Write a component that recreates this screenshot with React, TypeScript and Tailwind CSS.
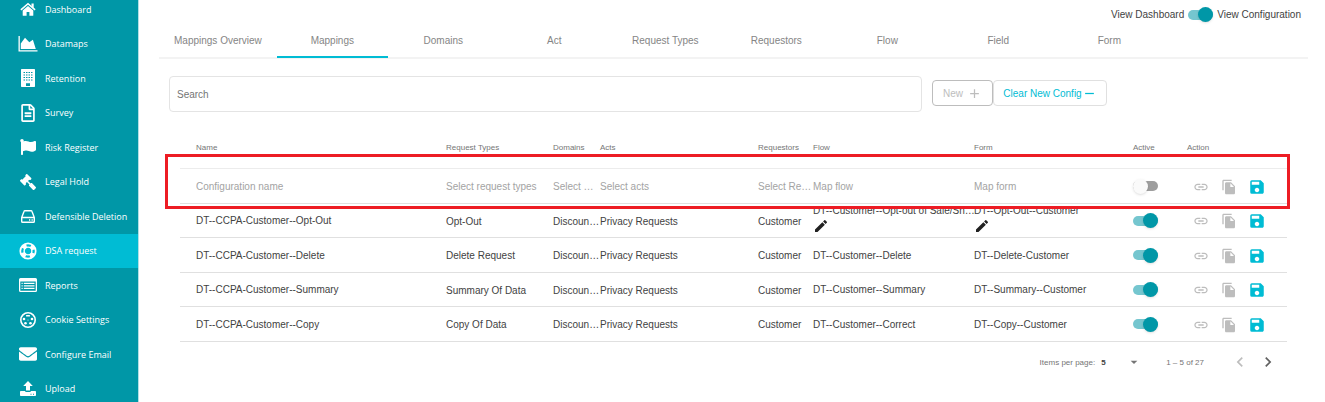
import React from 'react';
import { FaEnvelope, FaFlag, FaGavel, FaRegFileAlt } from 'react-icons/fa';
import {
  MdAdd,
  MdArrowDropDown,
  MdChevronLeft,
  MdChevronRight,
  MdEdit,
  MdFileCopy,
  MdLink,
  MdRemove,
  MdSave,
} from 'react-icons/md';

const HomeIcon = () => (
  <svg viewBox="0 0 16 14" className="w-4 h-[14px]" fill="currentColor">
    <path d="M.9 7.900 8 1.700l7.100 6.200" fill="none" stroke="currentColor" strokeWidth="1.600" />
    <path d="M11.500 1.500h2.200v4.800l-2.200-2z" />
    <path d="M8 3.900l5.300 4.600v4.700q0 .6-.6.6H9.400V9.900H6.600v3.900H3.300q-.6 0-.6-.6V8.500z" />
  </svg>
);

const AreaChartIcon = () => (
  <svg viewBox="0 0 20 16" className="w-5 h-4" fill="currentColor">
    <path d="M.5 0h1.300v14.200H19.500v1.300H.5z" />
    <path d="M2.800 13V7.500L7 1.800l4.300 4.400 3.600-2.400L17.800 13z" />
  </svg>
);

const BuildingIcon = () => (
  <svg viewBox="0 0 14 18" className="w-[14px] h-[18px]" fill="currentColor">
    <path
      fillRule="evenodd"
      d="M.7 0h12.6q.7 0 .7.7v16.6q0 .7-.7.7H.7q-.7 0-.7-.7V.7Q0 0 .7 0zM5 14.2V17h4v-2.8z"
    />
    <path
      d="M2.500 3.500h9M2.500 6h9M2.500 8.500h9M2.500 11h9"
      stroke="#0097a7"
      strokeWidth="1.2"
      strokeDasharray="1.5 1"
    />
  </svg>
);

const DriveIcon = () => (
  <svg viewBox="0 0 14 13" className="w-[14px] h-[13px]" fill="none" stroke="currentColor" strokeWidth="1.400" strokeLinejoin="round">
    <path d="M.7 7.500 3 1.400Q3.200.7 4 .7h6q.8 0 1 .7l2.300 6.100v3.900q0 .9-.9.9H1.600q-.9 0-.9-.9zM.7 7.500h12.600" />
    <path d="M8 10h1.300M10.500 10h1.300" />
  </svg>
);

const LifeRingIcon = () => (
  <svg viewBox="0 0 18 18" className="size-[18px]" fill="none" stroke="currentColor">
    <circle cx="9" cy="9" r="7.700" strokeWidth="1.700" />
    <circle cx="9" cy="9" r="3.900" strokeWidth="1.400" />
    <circle cx="9" cy="9" r="5.600" strokeWidth="4" strokeDasharray="4.400 4.396" strokeDashoffset="-2.200" />
  </svg>
);

const ListIcon = () => (
  <svg viewBox="0 0 18 14" className="w-[18px] h-[14px]" fill="currentColor">
    <path
      fillRule="evenodd"
      d="M1.500 0h15Q18 0 18 1.500v11q0 1.500-1.500 1.500h-15Q0 14 0 12.500v-11Q0 0 1.500 0zM1.300 3.500v8.700q0 .5.5.5h14.400q.5 0 .5-.5V3.500z"
    />
    <path d="M2.500 4.800h1.200V6H2.500zM4.800 4.800h10.700V6H4.800zM2.500 7.300h1.200v1.200H2.500zM4.800 7.300h10.700v1.200H4.800zM2.500 9.800h1.200V11H2.500zM4.800 9.800h10.700V11H4.800z" />
  </svg>
);

const CookieIcon = () => (
  <svg viewBox="0 0 16 16" className="size-4" fill="currentColor">
    <circle cx="8" cy="8" r="7.200" fill="none" stroke="currentColor" strokeWidth="1.600" />
    <rect x="6" y="2.900" width="4" height="1.700" rx=".6" />
    <circle cx="4" cy="7" r="1.300" />
    <circle cx="12" cy="7" r="1.300" />
    <circle cx="8" cy="8" r=".5" />
    <circle cx="5.500" cy="11.300" r="1.300" />
    <circle cx="10.500" cy="11.300" r="1.300" />
  </svg>
);

const UploadIcon = () => (
  <svg viewBox="0 0 16 15" className="w-4 h-[15px]" fill="currentColor">
    <path d="M8 0l4.800 5H10v4.500H6V5H3.200z" />
    <path
      fillRule="evenodd"
      d="M.8 10H5q.2 1 1.200 1h3.600q1 0 1.200-1h4.200q.8 0 .8.800v3.400q0 .8-.8.8H.8q-.8 0-.8-.8v-3.400Q0 10 .8 10zM10.500 12.800v1h1v-1zM13 12.800v1h1v-1z"
    />
  </svg>
);

const NAV_ITEMS = [
  { label: 'Dashboard', icon: <HomeIcon /> },
  { label: 'Datamaps', icon: <AreaChartIcon /> },
  { label: 'Retention', icon: <BuildingIcon /> },
  { label: 'Survey', icon: <FaRegFileAlt className="size-[18px]" /> },
  { label: 'Risk Register', icon: <FaFlag className="size-4" /> },
  { label: 'Legal Hold', icon: <FaGavel className="size-4 -scale-x-100" /> },
  { label: 'Defensible Deletion', icon: <DriveIcon /> },
  { label: 'DSA request', icon: <LifeRingIcon />, active: true },
  { label: 'Reports', icon: <ListIcon /> },
  { label: 'Cookie Settings', icon: <CookieIcon /> },
  { label: 'Configure Email', icon: <FaEnvelope className="size-[18px]" /> },
  { label: 'Upload', icon: <UploadIcon /> },
];

const TABS = [
  'Mappings Overview',
  'Mappings',
  'Domains',
  'Act',
  'Request Types',
  'Requestors',
  'Flow',
  'Field',
  'Form',
];

interface Mapping {
  name: string;
  requestType: string;
  flow: string;
  form: string;
  editable?: boolean;
}

const MAPPINGS: Mapping[] = [
  {
    name: 'DT--CCPA-Customer--Opt-Out',
    requestType: 'Opt-Out',
    flow: 'DT--Customer--Opt-out of Sale/Sh…',
    form: 'DT--Opt-Out--Customer',
    editable: true,
  },
  {
    name: 'DT--CCPA-Customer--Delete',
    requestType: 'Delete Request',
    flow: 'DT--Customer--Delete',
    form: 'DT--Delete-Customer',
  },
  {
    name: 'DT--CCPA-Customer--Summary',
    requestType: 'Summary Of Data',
    flow: 'DT--Customer--Summary',
    form: 'DT--Summary--Customer',
  },
  {
    name: 'DT--CCPA-Customer--Copy',
    requestType: 'Copy Of Data',
    flow: 'DT--Customer--Correct',
    form: 'DT--Copy--Customer',
  },
];

const Toggle: React.FC<{ label: string; on?: boolean }> = ({ label, on = false }) => (
  <input
    type="checkbox"
    role="switch"
    aria-label={label}
    defaultChecked={on}
    className="appearance-none flex items-center justify-start checked:justify-end w-[25px] h-[10px] shrink-0 rounded-full bg-[#9e9e9e] checked:bg-[#75c6cf] before:block before:size-[15px] before:shrink-0 before:rounded-full before:bg-[#fafafa] before:shadow checked:before:bg-[#0097a7] cursor-pointer"
  />
);

const RowActions = () => (
  <div className="flex items-center pt-px">
    <button aria-label="Copy link" className="w-7 flex justify-center text-[#bdbdbd]">
      <MdLink className="size-4" />
    </button>
    <button aria-label="Duplicate" className="w-7 flex justify-center text-[#bdbdbd]">
      <MdFileCopy className="size-4" />
    </button>
    <button aria-label="Save" className="w-7 flex justify-center text-[#00bcd4]">
      <MdSave className="size-[18px]" />
    </button>
  </div>
);

const FieldSelect: React.FC<{ label: string }> = ({ label }) => (
  <select aria-label={label} className="appearance-none block w-full truncate bg-transparent text-[#a3a3a3]">
    <option>{label}</option>
  </select>
);

const MappedCell: React.FC<{ value: string; editable?: boolean }> = ({ value, editable }) => (
  <td className={editable ? 'pb-[3px]' : 'pt-px'}>
    <span className="block whitespace-nowrap leading-[14px]">{value}</span>
    {editable && (
      <button aria-label={`Edit ${value}`} className="block text-[#212121]">
        <MdEdit className="size-4" />
      </button>
    )}
  </td>
);

const Sidebar = () => (
  <aside className="w-[139px] h-screen shrink-0 overflow-hidden bg-[#0097a7] border-r border-[#b2dfe5] font-['Open_Sans',sans-serif] text-[9px] text-white">
    <nav className="-mt-2 h-[414px] flex flex-col">
      {NAV_ITEMS.map((item) => (
        <a
          key={item.label}
          href="#"
          className={`flex-1 flex items-center gap-[7px] pl-[18px] whitespace-nowrap ${item.active ? 'bg-[#00bcd4]' : ''}`}
        >
          <span className="w-5 flex justify-center">{item.icon}</span>
          {item.label}
        </a>
      ))}
    </nav>
  </aside>
);

const MappingsTable = () => (
  <div className="relative mt-[14px] ml-[21px] mr-[21px]">
    <table className="w-full table-fixed border-separate border-spacing-0 text-left text-[#424242] [&_td]:border-b [&_td]:border-[#e0e0e0] [&_th]:border-b [&_th]:border-[#ececec]">
      <colgroup>
        <col />
        <col className="w-[107px]" />
        <col className="w-[47px]" />
        <col className="w-[158px]" />
        <col className="w-[55px]" />
        <col className="w-[161px]" />
        <col className="w-[159px]" />
        <col className="w-[54px]" />
        <col className="w-[100px]" />
      </colgroup>
      <thead>
        <tr className="h-[43px] text-[8px] text-[#757575] [&_th]:font-normal">
          <th className="pl-4">Name</th>
          <th>Request Types</th>
          <th>Domains</th>
          <th>Acts</th>
          <th>Requestors</th>
          <th>Flow</th>
          <th>Form</th>
          <th>Active</th>
          <th>Action</th>
        </tr>
      </thead>
      <tbody>
        <tr className="h-[35px]">
          <td className="pl-4">
            <input
              aria-label="Configuration name"
              placeholder="Configuration name"
              className="block w-full outline-none placeholder:text-[#a3a3a3]"
            />
          </td>
          <td><FieldSelect label="Select request types" /></td>
          <td className="pr-[2px]"><FieldSelect label="Select domains" /></td>
          <td><FieldSelect label="Select acts" /></td>
          <td><FieldSelect label="Select Requestors" /></td>
          <td><FieldSelect label="Map flow" /></td>
          <td><FieldSelect label="Map form" /></td>
          <td><Toggle label="Active" /></td>
          <td><RowActions /></td>
        </tr>
        {MAPPINGS.map((row) => (
          <tr key={row.name} className="odd:h-[35px] even:h-[34px]">
            <td className="truncate pl-4">{row.name}</td>
            <td className="pt-px truncate">{row.requestType}</td>
            <td className="pt-px whitespace-nowrap">Discoun…</td>
            <td className="pt-px truncate">Privacy Requests</td>
            <td className="pt-px truncate">Customer</td>
            <MappedCell value={row.flow} editable={row.editable} />
            <MappedCell value={row.form} editable={row.editable} />
            <td><Toggle label={`${row.name} active`} on /></td>
            <td><RowActions /></td>
          </tr>
        ))}
      </tbody>
    </table>

    {/* Highlight around the new configuration row */}
    <div className="absolute top-7 -left-[15px] -right-[3px] h-[55px] border-[3px] border-[#ed1c24] pointer-events-none" />
  </div>
);

export default function App() {
  return (
    <div className="flex h-screen overflow-hidden bg-white font-['Liberation_Sans',Arial,sans-serif] text-[10px] leading-[15px]">
      <Sidebar />

      <main className="flex-1 min-w-0 pl-5 pr-[17px]">
        {/* View switch */}
        <div className="h-6 pt-[5px] pr-[7px] flex items-center justify-end gap-1 text-[#424242]">
          <span>View Dashboard</span>
          <Toggle label="View Configuration" on />
          <span>View Configuration</span>
        </div>

        {/* Tabs */}
        <div role="tablist" className="h-[35px] flex border-b-2 border-[#f3f3f3] text-[#858585]">
          {TABS.map((tab) => (
            <button
              key={tab}
              role="tab"
              aria-selected={tab === 'Mappings'}
              className={`min-w-[111px] px-[15px] -mb-px border-b-2 ${tab === 'Mappings' ? 'border-[#00bcd4]' : 'border-transparent'}`}
            >
              {tab}
            </button>
          ))}
        </div>

        {/* Search and actions */}
        <div className="mt-[17px] pl-[10px] flex items-start">
          <input
            aria-label="Search"
            placeholder="Search"
            className="flex-1 max-w-[753px] h-9 px-[7px] border border-[#e4e4e4] rounded outline-none placeholder:text-[#757575]"
          />
          <div className="ml-[10px] mt-1 flex">
            <button className="w-[61px] h-[26px] flex items-center justify-center gap-1 border border-[#bdbdbd] rounded-sm text-[#bdbdbd]">
              New
              <MdAdd className="size-[15px]" />
            </button>
            <button className="w-[114px] h-[26px] flex items-center justify-center border border-[#e0e0e0] rounded-sm text-[#00bcd4]">
              Clear New Config
              <MdRemove className="size-[15px]" />
            </button>
          </div>
        </div>

        <MappingsTable />

        {/* Paginator */}
        <div className="mt-[10px] mr-[26px] flex items-center justify-end text-[8px] text-[#757575]">
          <label htmlFor="page-size">Items per page:</label>
          <div className="ml-[6px] flex items-center">
            <select id="page-size" className="appearance-none w-10 font-bold text-[#424242]">
              <option>5</option>
            </select>
            <MdArrowDropDown className="-ml-[15px] size-4 pointer-events-none" />
          </div>
          <span className="ml-6 mr-[22px]">1 – 5 of 27</span>
          <button aria-label="Previous page" className="w-7 flex justify-center text-[#bdbdbd]">
            <MdChevronLeft className="size-5" />
          </button>
          <button aria-label="Next page" className="w-7 flex justify-center text-[#616161]">
            <MdChevronRight className="size-5" />
          </button>
        </div>
      </main>
    </div>
  );
}
